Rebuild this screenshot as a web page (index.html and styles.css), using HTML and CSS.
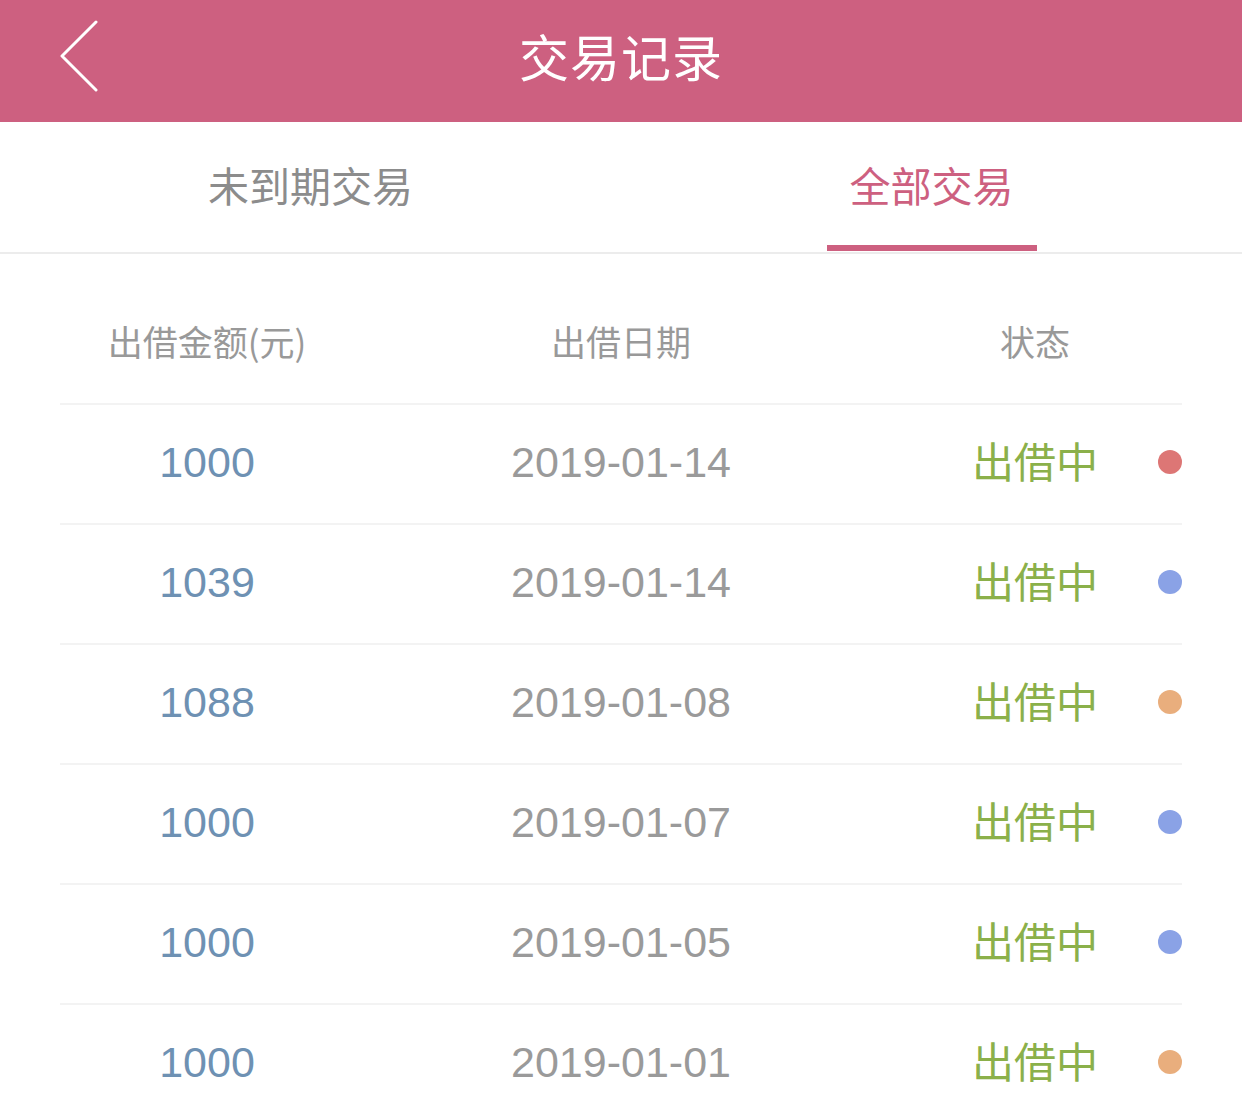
FILE: index.html
```html
<!DOCTYPE html>
<html lang="zh-CN">
<head>
    <meta charset="UTF-8">
    <meta name="viewport" content="width=device-width, initial-scale=1.0">
    <title>交易记录</title>
    <link rel="stylesheet" href="styles.css">
</head>
<body>
    <!-- Top bar -->
    <div class="topbar">
        <div class="back">
            <svg width="40" height="74" viewBox="0 0 40 74">
                <polyline points="36,3 2,37 36,71" fill="none" stroke="#fff" stroke-width="3" stroke-linecap="round" stroke-linejoin="round"/>
            </svg>
        </div>
        <h1>交易记录</h1>
        <div></div>
    </div>

    <!-- Tabs -->
    <div class="tabs">
        <div class="tab">未到期交易</div>
        <div class="tab active">全部交易</div>
    </div>

    <!-- Records -->
    <div class="table">
        <div class="row head">
            <div>出借金额(元)</div>
            <div>出借日期</div>
            <div class="status">状态</div>
        </div>
        <div class="row">
            <div class="amount">1000</div>
            <div class="date">2019-01-14</div>
            <div class="status lending"><span>出借中</span><i class="dot red"></i></div>
        </div>
        <div class="row">
            <div class="amount">1039</div>
            <div class="date">2019-01-14</div>
            <div class="status lending"><span>出借中</span><i class="dot blue"></i></div>
        </div>
        <div class="row">
            <div class="amount">1088</div>
            <div class="date">2019-01-08</div>
            <div class="status lending"><span>出借中</span><i class="dot orange"></i></div>
        </div>
        <div class="row">
            <div class="amount">1000</div>
            <div class="date">2019-01-07</div>
            <div class="status lending"><span>出借中</span><i class="dot blue"></i></div>
        </div>
        <div class="row">
            <div class="amount">1000</div>
            <div class="date">2019-01-05</div>
            <div class="status lending"><span>出借中</span><i class="dot blue"></i></div>
        </div>
        <div class="row">
            <div class="amount">1000</div>
            <div class="date">2019-01-01</div>
            <div class="status lending"><span>出借中</span><i class="dot orange"></i></div>
        </div>
    </div>
</body>
</html>
```

FILE: styles.css
```css
body {
    font-family: "Liberation Sans", "Noto Sans CJK SC", sans-serif;
    margin: 0;
    padding: 0;
    background: #fff;
    overflow: hidden;
}
.topbar {
    height: 122px;
    background: #cd6080;
    display: grid;
    grid-template-columns: 1fr auto 1fr;
    align-items: center;
}
.back {
    padding-left: 60px;
    display: flex;
    align-items: center;
    margin-top: -10px;
}
.back svg {
    display: block;
}
.topbar h1 {
    margin: 0 0 12px;
    color: #fff;
    font-family: "Noto Sans CJK SC", sans-serif;
    font-weight: normal;
    font-size: 50px;
    letter-spacing: 1px;
}
.tabs {
    display: flex;
    height: 130px;
    border-bottom: 2px solid #ececec;
}
.tab {
    flex: 1;
    display: flex;
    justify-content: center;
    align-items: center;
    padding-bottom: 6px;
    position: relative;
    font-family: "Noto Sans CJK SC", sans-serif;
    font-size: 41px;
    color: #8c8c8c;
}
.tab.active {
    color: #cd6080;
}
.tab.active::after {
    content: "";
    position: absolute;
    bottom: 1px;
    left: 50%;
    width: 210px;
    height: 6px;
    margin-left: -105px;
    background: #cd6080;
}
.table {
    margin: 30px 60px 0;
}
.row {
    display: grid;
    grid-template-columns: 294px 1fr 294px;
    align-items: center;
    height: 118px;
    border-bottom: 2px solid #f3f3f3;
    text-align: center;
    font-size: 43px;
}
.row.head {
    height: 119px;
    font-family: "Noto Sans CJK SC", sans-serif;
    font-size: 35px;
    color: #999;
}
.row.head div {
    margin-bottom: 6px;
}
.amount,
.date {
    margin-bottom: 4px;
}
.amount {
    color: #6e91b3;
}
.date {
    color: #9a9a9a;
}
.status {
    position: relative;
}
.lending span {
    display: inline-block;
    margin-bottom: 10px;
    font-family: "Noto Sans CJK SC", sans-serif;
    font-size: 42px;
    color: #8bb04a;
}
.dot {
    position: absolute;
    right: 0;
    top: 50%;
    width: 24px;
    height: 24px;
    margin-top: -14px;
    border-radius: 50%;
}
.dot.red {
    background: #dd7675;
}
.dot.blue {
    background: #8aa2e6;
}
.dot.orange {
    background: #e9ae7d;
}
```
